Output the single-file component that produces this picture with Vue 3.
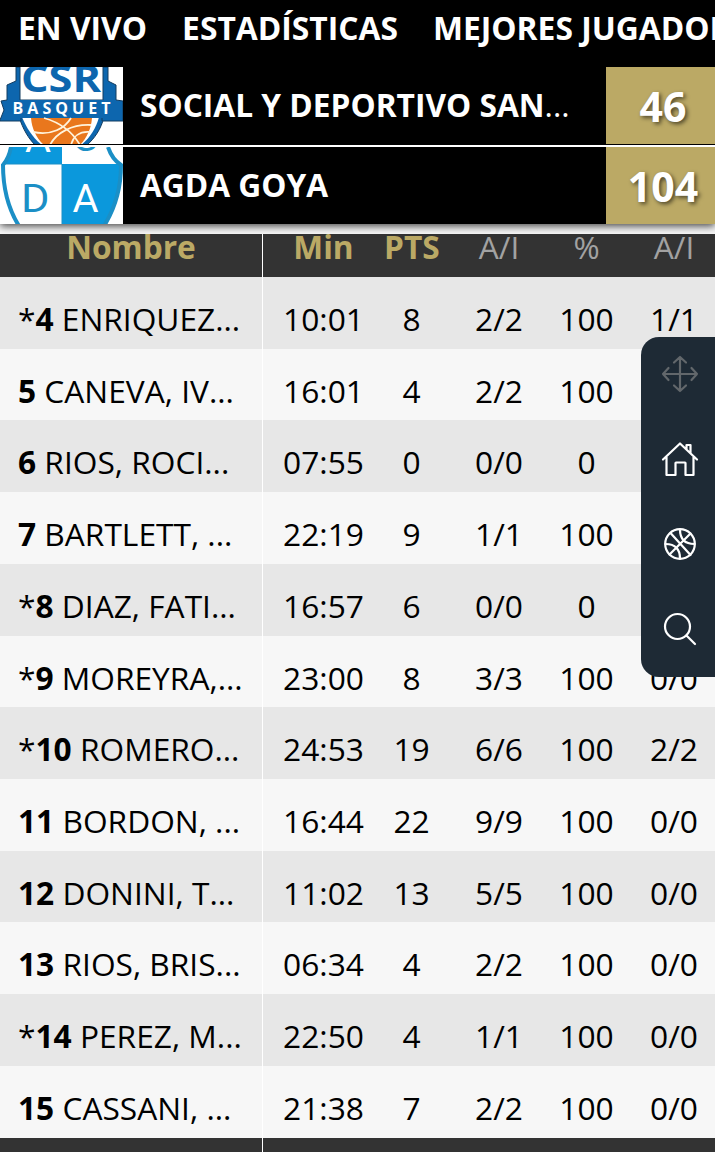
<script setup>
const tabs = ['EN VIVO', 'ESTADÍSTICAS', 'MEJORES JUGADORES']

const players = [
    { starter: true, number: 4, name: 'ENRIQUEZ...', stats: ['10:01', '8', '2/2', '100', '1/1'] },
    { starter: false, number: 5, name: 'CANEVA, IV...', stats: ['16:01', '4', '2/2', '100', '0/0'] },
    { starter: false, number: 6, name: 'RIOS, ROCI...', stats: ['07:55', '0', '0/0', '0', '0/0'] },
    { starter: false, number: 7, name: 'BARTLETT, ...', stats: ['22:19', '9', '1/1', '100', '0/0'] },
    { starter: true, number: 8, name: 'DIAZ, FATI...', stats: ['16:57', '6', '0/0', '0', '0/0'] },
    { starter: true, number: 9, name: 'MOREYRA,...', stats: ['23:00', '8', '3/3', '100', '0/0'] },
    { starter: true, number: 10, name: 'ROMERO...', stats: ['24:53', '19', '6/6', '100', '2/2'] },
    { starter: false, number: 11, name: 'BORDON, ...', stats: ['16:44', '22', '9/9', '100', '0/0'] },
    { starter: false, number: 12, name: 'DONINI, T...', stats: ['11:02', '13', '5/5', '100', '0/0'] },
    { starter: false, number: 13, name: 'RIOS, BRIS...', stats: ['06:34', '4', '2/2', '100', '0/0'] },
    { starter: true, number: 14, name: 'PEREZ, M...', stats: ['22:50', '4', '1/1', '100', '0/0'] },
    { starter: false, number: 15, name: 'CASSANI, ...', stats: ['21:38', '7', '2/2', '100', '0/0'] },
]
</script>

<template>
    <div class="page">
        <nav class="tabs">
            <span v-for="tab in tabs" :key="tab">{{ tab }}</span>
        </nav>

        <header class="scoreboard">
            <div class="team">
                <svg class="crest" viewBox="0 0 123 77">
                    <rect width="123" height="77" fill="#fff" />
                    <path d="M19 50C23 62 28 71 36 79H86C95 71 101 62 104 50Z" fill="#0d66ae" stroke="#123c60" stroke-width="1" />
                    <path d="M22 50C27 62 33 71 43 79H80C89 72 96 62 99 50Z" fill="#fff" />
                    <path d="M16 0V14L7 18V33L1 34L4 43L0 53V54H21V50H102V54H123V34L116 33V18L108 14V0H103V33H20V0Z" fill="#0d66ae" stroke="#123c60" stroke-width="1" />
                    <path d="M20 33H103V51H20Z" fill="#0d66ae" />
                    <path d="M31 51H92C91 63 86 72 79 79H45C37 72 32 63 31 51Z" fill="#e9771d" />
                    <path d="M44 51C58 55 72 64 80 78M33 65C52 69 65 61 71 51M71 78C73 70 79 64 90 65M50 78C56 66 72 57 91 58" fill="none" stroke="#fff3dc" stroke-width="1.8" />
                    <text class="csr" x="21" y="25" textLength="80" lengthAdjust="spacingAndGlyphs">CSR</text>
                    <text class="basquet" x="12.500" y="46.500" textLength="98">BASQUET</text>
                </svg>
                <span class="team-name">SOCIAL Y DEPORTIVO SAN<span class="dots">...</span></span>
                <span class="score">46</span>
            </div>
            <div class="team">
                <svg class="crest" viewBox="0 0 123 77">
                    <rect width="123" height="77" fill="#fff" />
                    <path d="M10 0H62V17H2Q8 10 10 0Z" fill="#0b98dc" />
                    <path d="M62 17H121C121 44 114 63 104 77H62Z" fill="#0b98dc" />
                    <path d="M11 0Q9 11 3 18C3 43 9 63 19 79M108 0Q112 12 121 18C121 43 114 63 104 79" fill="none" stroke="#1b8fc6" stroke-width="4" />
                    <path d="M5 17H62V77" fill="none" stroke="#1b8fc6" stroke-width="1" />
                    <text class="initial light" x="25" y="5" textLength="26" lengthAdjust="spacingAndGlyphs">A</text>
                    <text class="initial" x="72" y="4" textLength="26" lengthAdjust="spacingAndGlyphs">G</text>
                    <text class="initial" x="21" y="65" textLength="28.500" lengthAdjust="spacingAndGlyphs">D</text>
                    <text class="initial light" x="72.500" y="65" textLength="26" lengthAdjust="spacingAndGlyphs">A</text>
                </svg>
                <span class="team-name">AGDA GOYA</span>
                <span class="score">104</span>
            </div>
        </header>

        <main class="stats">
            <div class="row head">
                <span class="name gold">Nombre</span>
                <span class="gold">Min</span>
                <span class="gold">PTS</span>
                <span>A/I</span>
                <span>%</span>
                <span>A/I</span>
            </div>
            <div v-for="player in players" :key="player.number" class="row">
                <span class="name"><template v-if="player.starter">*</template><b>{{ player.number }}</b> {{ player.name }}</span>
                <span v-for="(stat, index) in player.stats" :key="index">{{ stat }}</span>
            </div>
            <div class="row foot"><span class="name"></span></div>
        </main>

        <aside class="toolbar">
            <svg class="move" viewBox="0 0 38 38">
                <path d="M19 2V36M2 19H36M13 7.500L19 2L25 7.500M13 30.500L19 36L25 30.500M7.500 13L2 19L7.500 25M30.500 13L36 19L30.500 25" />
            </svg>
            <svg viewBox="0 0 38 38">
                <path d="M2 19.500L19 3.500L36 19.500M5.500 17V35H14.500V23Q14.500 22.500 15 22.500H24Q24.500 22.500 24.500 23V35H32.500V17M25.500 9V5H29.500V13" />
            </svg>
            <svg viewBox="0 0 38 38">
                <circle cx="19" cy="19" r="14.800" />
                <path d="M9.500 8L29.500 30M29.500 8.500L8.500 29.500M19 4.500C19 14 24 19 33.500 19M4.500 19C14 19 19 24 19 33.500" />
            </svg>
            <svg viewBox="0 0 38 38">
                <circle cx="16.500" cy="16.500" r="12.500" />
                <path d="M25.500 25.500L34 34" />
            </svg>
        </aside>
    </div>
</template>

<style>
body {
    margin: 0;
}
</style>

<style scoped>
.page {
    position: relative;
    width: 715px;
    height: 1152px;
    overflow: hidden;
    background: #f7f7f7;
    color: #000;
    font-family: "Open Sans", sans-serif;
    font-size: 31.7px;
}

.tabs {
    display: flex;
    gap: 35px;
    box-sizing: border-box;
    height: 67px;
    padding: 6px 0 0 18px;
    background: #000;
    color: #fff;
    font-size: 31.8px;
    font-weight: 700;
    line-height: 44px;
    white-space: nowrap;
}

.scoreboard {
    position: relative;
    background: #000;
    box-shadow: 0 2px 8px rgba(0, 0, 0, 0.75);
}

.team {
    display: flex;
    height: 77px;
    color: #fff;
}

.team + .team {
    margin-top: 1px;
    border-top: 2px solid #fff;
}

.crest {
    flex: none;
    width: 123px;
    height: 77px;
}

.csr {
    fill: #0d66ae;
    font-size: 37px;
    font-weight: 700;
}

.basquet {
    fill: #fff;
    font-size: 16px;
    font-weight: 700;
}

.initial {
    fill: #1b8fc6;
    font-family: Roboto, sans-serif;
    font-size: 38px;
}

.initial.light {
    fill: #fff;
}

.team-name {
    flex: 1;
    padding-left: 17px;
    font-weight: 700;
    line-height: 75px;
    white-space: nowrap;
}

.dots {
    font-weight: 400;
}

.score {
    width: 109px;
    padding-left: 5px;
    box-sizing: border-box;
    background: #bba965;
    font-size: 41px;
    font-weight: 700;
    line-height: 78px;
    text-align: center;
    text-shadow: 2px 2px 4px rgba(0, 0, 0, 0.6);
}

.stats {
    padding-top: 10px;
}

.row {
    display: grid;
    grid-template-columns: 263px 121px 55px 120px 55px 120px;
    height: 71.72px;
    line-height: 83px;
    text-align: center;
    white-space: nowrap;
}

.row:nth-child(even) {
    background: #e7e7e7;
}

.row.head {
    height: 43px;
    background: #333;
    color: #a2a2a2;
    line-height: 26px;
}

.row.foot {
    height: 15px;
    background: #333;
}

.name {
    box-sizing: border-box;
    padding-left: 18px;
    border-right: 1px solid #fff;
    text-align: left;
}

.head .name {
    padding-left: 0;
    text-align: center;
}

.gold {
    color: #bba965;
    font-weight: 700;
}

.toolbar {
    position: absolute;
    top: 337px;
    right: 0;
    display: flex;
    flex-direction: column;
    align-items: center;
    gap: 47px;
    box-sizing: border-box;
    width: 74px;
    height: 340px;
    padding: 18px 0 0 4px;
    border-radius: 18px 0 0 18px;
    background: #1e2a35;
}

.toolbar svg {
    width: 38px;
    height: 38px;
    fill: none;
    stroke: #fff;
    stroke-width: 2.2;
    stroke-linecap: round;
    stroke-linejoin: round;
}

.toolbar .move {
    stroke: #62676b;
}
</style>
